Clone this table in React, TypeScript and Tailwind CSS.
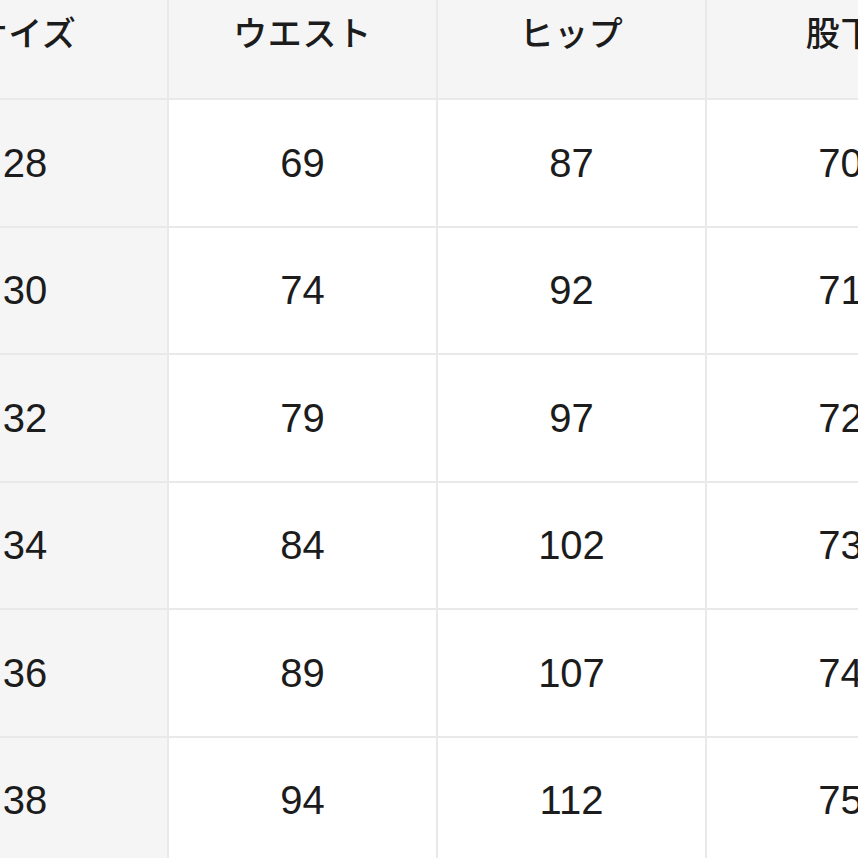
const columns = ['サイズ', 'ウエスト', 'ヒップ', '股下'];

const rows = [
  ['28', '69', '87', '70'],
  ['30', '74', '92', '71'],
  ['32', '79', '97', '72'],
  ['34', '84', '102', '73'],
  ['36', '89', '107', '74'],
  ['38', '94', '112', '75'],
];

export default function App() {
  return (
    <div
      className="h-[858px] w-[858px] overflow-hidden bg-white text-[#1c1c1c]"
      style={{ fontFamily: '"Liberation Sans", "Noto Sans CJK JP", sans-serif' }}
    >
      {/* size table, cropped like the photo */}
      <div className="-ml-[117px] -mt-[29px] grid w-max grid-cols-[284px_267px_267px_267px] gap-[2px] bg-[#e9e9e9]">
        {columns.map((c) => (
          <div
            key={c}
            className="flex h-[127px] items-center justify-center bg-[#f5f5f5] text-[34px] font-medium tracking-[0.02em]"
          >
            {c}
          </div>
        ))}

        {rows.map((r) =>
          r.map((v, i) => (
            <div
              key={r[0] + '-' + i}
              className={
                'flex h-[125.5px] items-center justify-center text-[40px] ' +
                (i === 0 ? 'bg-[#f5f5f5]' : 'bg-white')
              }
            >
              {v}
            </div>
          ))
        )}
      </div>
    </div>
  );
}
